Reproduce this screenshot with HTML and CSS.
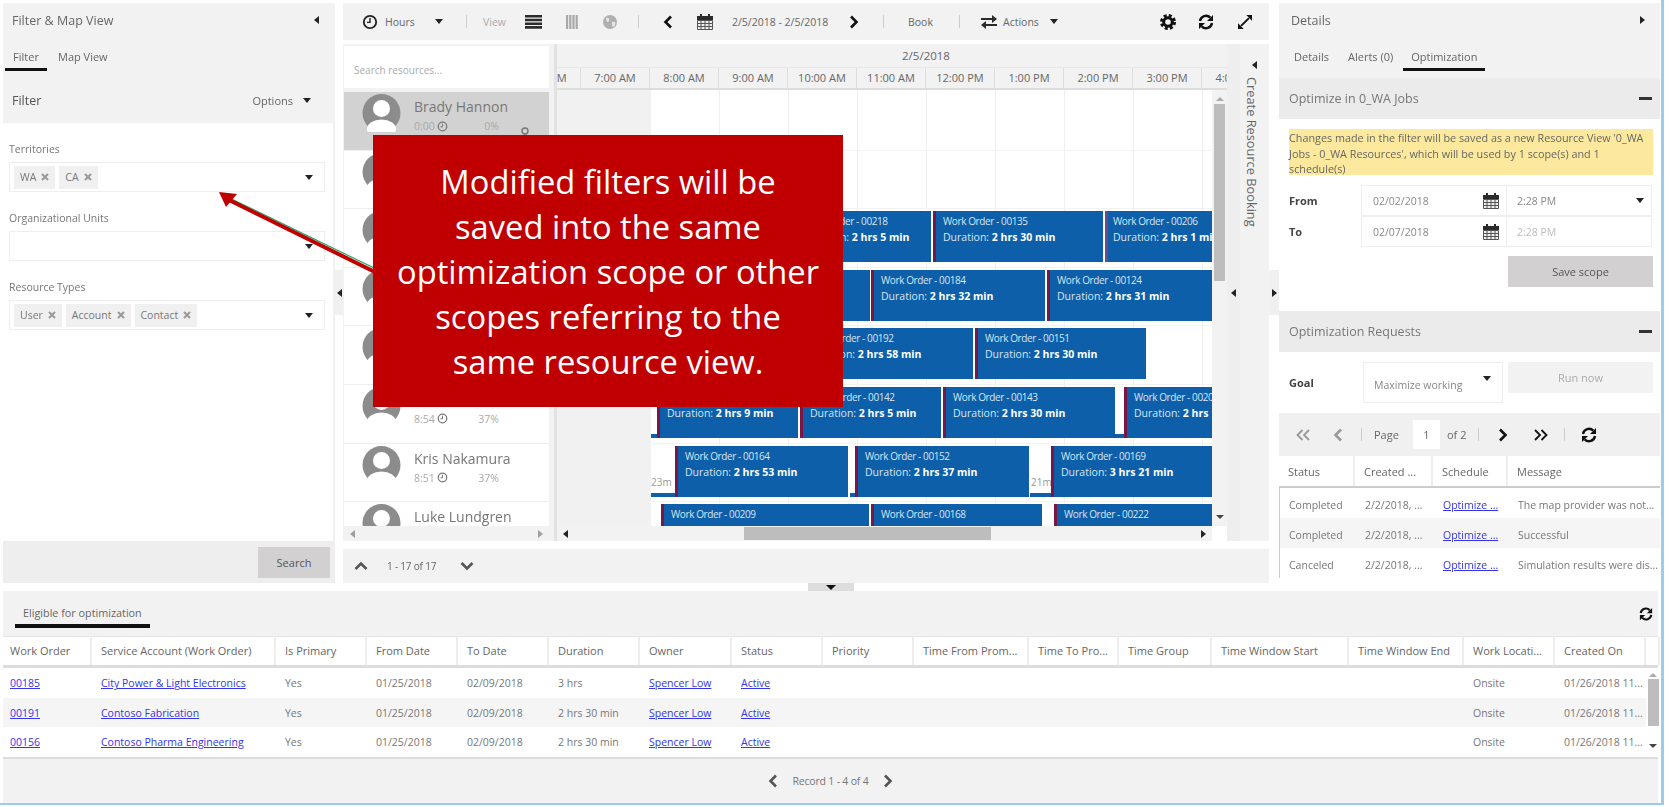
FILE: index.html
```html
<!DOCTYPE html>
<html lang="en">
<head>
<meta charset="utf-8">
<title>Schedule Board</title>
<link rel="stylesheet" href="styles.css">
</head>
<body>
<svg class="defs" width="0" height="0" aria-hidden="true">
  <symbol id="avatar" viewBox="0 0 38 38"><circle cx="19" cy="19" r="19" fill="#8c8c8c"/><circle cx="19" cy="14.5" r="8.5" fill="#fff"/><ellipse cx="19" cy="35" rx="14.5" ry="9.5" fill="#fff"/></symbol>
  <symbol id="clock" viewBox="0 0 16 16"><circle cx="8" cy="8" r="6.2" fill="none" stroke="currentColor" stroke-width="1.8"/><path d="M8 4v4.4h-3" fill="none" stroke="currentColor" stroke-width="1.4"/></symbol>
  <symbol id="list" viewBox="0 0 17 14"><path d="M0 0h17v2.6H0zM0 3.7h17v2.6H0zM0 7.4h17V10H0zM0 11.1h17v2.6H0z" fill="#2b2b2b"/></symbol>
  <symbol id="bars" viewBox="0 0 12 14"><path d="M0 0h2.2v14H0zM3.2 0h2.2v14H3.2zM6.4 0h2.2v14H6.4zM9.6 0h2.2v14H9.6z" fill="#a8a8a8"/></symbol>
  <symbol id="globe" viewBox="0 0 14 14"><circle cx="7" cy="7" r="7" fill="#b0b0b0"/><path d="M3 3c3-1 4 1 3 3S3 7 3 3zM9 7c3-1 4 0 3 3s-4 2-3-3z" fill="#e4e4e4"/></symbol>
  <symbol id="left" viewBox="0 0 10 14"><path d="M8 1.5 2.5 7 8 12.5" fill="none" stroke="currentColor" stroke-width="2.6"/></symbol>
  <symbol id="right" viewBox="0 0 10 14"><path d="M2 1.5 7.5 7 2 12.5" fill="none" stroke="currentColor" stroke-width="2.6"/></symbol>
  <symbol id="up" viewBox="0 0 14 10"><path d="M1.5 8 7 2.5 12.5 8" fill="none" stroke="currentColor" stroke-width="2.6"/></symbol>
  <symbol id="down" viewBox="0 0 14 10"><path d="M1.5 2 7 7.5 12.5 2" fill="none" stroke="currentColor" stroke-width="2.6"/></symbol>
  <symbol id="dleft" viewBox="0 0 16 12"><path d="M7.5 1 2.5 6l5 5M14 1 9 6l5 5" fill="none" stroke="currentColor" stroke-width="1.8"/></symbol>
  <symbol id="dright" viewBox="0 0 16 12"><path d="M2 1l5 5-5 5M8.500 1l5 5-5 5" fill="none" stroke="currentColor" stroke-width="1.8"/></symbol>
  <symbol id="cal" viewBox="0 0 16 16"><path d="M3 0h2v2h6V0h2v2h3v4H0V2h3z" fill="#2b2b2b"/><path d="M.5 6.500h15v9H.5zM4 6.500v9M8 6.500v9M12 6.500v9M.5 9.500h15M.5 12.500h15" fill="#eee" stroke="#555"/></symbol>
  <symbol id="swap" viewBox="0 0 16 14"><path d="M0 3h11V0l5 4-5 4V5H0zM16 9H5V6L0 10l5 4v-3h11z" fill="#2b2b2b"/></symbol>
  <symbol id="gear" viewBox="0 0 16 16"><circle cx="8" cy="8" r="4.300" fill="none" stroke="#111" stroke-width="3"/><circle cx="8" cy="8" r="6.500" fill="none" stroke="#111" stroke-width="3" stroke-dasharray="3 2.100"/></symbol>
  <symbol id="sync" viewBox="0 0 16 16"><path d="M2 7a6 6 0 0 1 10.300-3.300M14 9a6 6 0 0 1-10.300 3.300" fill="none" stroke="#111" stroke-width="2.400"/><path d="M15 1v6H9zM1 15V9h6z" fill="#111"/></symbol>
  <symbol id="expand" viewBox="0 0 16 16"><path d="M3.500 12.500 12.500 3.500" stroke="#111" stroke-width="2.200"/><path d="M16 0v6.500L9.500 0zM0 16V9.500L6.500 16z" fill="#111"/></symbol>
  <symbol id="x" viewBox="0 0 8 8"><path d="M1 1l6 6M7 1 1 7" stroke="#999" stroke-width="2"/></symbol>
  <symbol id="pin" viewBox="0 0 10 12"><circle cx="5" cy="4" r="3" fill="none" stroke="#777" stroke-width="1.400"/><path d="M5 7v5" stroke="#777" stroke-width="1.400"/></symbol>
</svg>

<div class="app">
  <div class="top">
    <section class="left">
      <div class="left-head">
        <div class="title-row"><span class="title">Filter &amp; Map View</span><i class="tri-l"></i></div>
        <div class="tabs"><span class="tab on tab-filter">Filter</span><span class="tab tab-map">Map View</span></div>
        <div class="filter-row"><strong class="filter-name">Filter</strong><span class="options">Options</span><i class="caret"></i></div>
      </div>
      <div class="left-body">
        <label class="field-label">Territories</label>
        <div class="box"><span class="chip">WA <svg class="x"><use href="#x"/></svg></span><span class="chip">CA <svg class="x"><use href="#x"/></svg></span><i class="caret push"></i></div>
        <label class="field-label">Organizational Units</label>
        <div class="box"><i class="caret push"></i></div>
        <label class="field-label">Resource Types</label>
        <div class="box"><span class="chip">User <svg class="x"><use href="#x"/></svg></span><span class="chip">Account <svg class="x"><use href="#x"/></svg></span><span class="chip">Contact <svg class="x"><use href="#x"/></svg></span><i class="caret push"></i></div>
      </div>
      <div class="left-foot"><button class="btn-search">Search</button></div>
    </section>

    <div class="split"><span class="split-tab"><i class="tri-l"></i></span></div>

    <section class="center">
      <div class="toolbar">
        <svg class="ic16 ml19"><use href="#clock"/></svg>
        <span class="tb-text w31 ml7">Hours</span>
        <i class="caret ml19"></i>
        <i class="sep ml22"></i>
        <span class="tb-text dim w23 ml16">View</span>
        <svg class="ic-list ml19"><use href="#list"/></svg>
        <svg class="ic-bars ml24"><use href="#bars"/></svg>
        <svg class="ic-globe ml25"><use href="#globe"/></svg>
        <i class="sep ml21"></i>
        <svg class="chev ml24"><use href="#left"/></svg>
        <svg class="ic16 ml24"><use href="#cal"/></svg>
        <span class="tb-text w94 ml19">2/5/2018 - 2/5/2018</span>
        <svg class="chev ml23"><use href="#right"/></svg>
        <i class="sep ml24"></i>
        <span class="tb-text w26 ml24">Book</span>
        <i class="sep ml25"></i>
        <svg class="ic16 ml21"><use href="#swap"/></svg>
        <span class="tb-text w38 ml6">Actions</span>
        <i class="caret ml9"></i>
        <svg class="ic16 ml101"><use href="#gear"/></svg>
        <svg class="ic16 ml22"><use href="#sync"/></svg>
        <svg class="ic14 ml24"><use href="#expand"/></svg>
      </div>

      <div class="sched">
        <div class="res">
          <div class="res-search">Search resources...</div>
          <div class="res-list">
            <div class="res-row sel"><svg class="avatar"><use href="#avatar"/></svg><div class="res-info"><div class="res-name">Brady Hannon</div><div class="res-sub"><span class="res-time">0:00</span><svg class="ic-clock"><use href="#clock"/></svg><span class="res-pct">0%</span></div></div><svg class="ic-pin"><use href="#pin"/></svg></div>
            <div class="res-row"><svg class="avatar"><use href="#avatar"/></svg></div>
            <div class="res-row"><svg class="avatar"><use href="#avatar"/></svg></div>
            <div class="res-row"><svg class="avatar"><use href="#avatar"/></svg></div>
            <div class="res-row"><svg class="avatar"><use href="#avatar"/></svg></div>
            <div class="res-row"><svg class="avatar"><use href="#avatar"/></svg><div class="res-info"><div class="res-name">&nbsp;</div><div class="res-sub"><span class="res-time">8:54</span><svg class="ic-clock"><use href="#clock"/></svg><span class="res-pct">37%</span></div></div></div>
            <div class="res-row"><svg class="avatar"><use href="#avatar"/></svg><div class="res-info"><div class="res-name">Kris Nakamura</div><div class="res-sub"><span class="res-time">8:51</span><svg class="ic-clock"><use href="#clock"/></svg><span class="res-pct">37%</span></div></div></div>
            <div class="res-row"><svg class="avatar"><use href="#avatar"/></svg><div class="res-info"><div class="res-name">Luke Lundgren</div></div></div>
          </div>
          <div class="hbar"><i class="tri-l faint"></i><i class="tri-r faint"></i></div>
        </div>
        <div class="res-divider"></div>
        <div class="tl">
          <div class="tl-date">2/5/2018</div>
          <div class="tl-hours">
            <span class="hour first">6:00 AM</span><span class="hour">7:00 AM</span><span class="hour">8:00 AM</span><span class="hour">9:00 AM</span><span class="hour">10:00 AM</span><span class="hour">11:00 AM</span><span class="hour">12:00 PM</span><span class="hour">1:00 PM</span><span class="hour">2:00 PM</span><span class="hour">3:00 PM</span><span class="hour">4:00 PM</span>
          </div>
          <div class="tl-main">
            <div class="canvas">
              <div class="off"></div>
              <div class="tl-row"></div>
              <div class="tl-row"></div>
              <div class="tl-row">
                <div class="bk" style="left:236px;width:138px"><p>Work Order - 00218</p><p>Duration: <b>2 hrs 5 min</b></p></div>
                <div class="bk" style="left:376px;width:170px"><p>Work Order - 00135</p><p>Duration: <b>2 hrs 30 min</b></p></div>
                <div class="bk thin" style="left:548px;width:120px"><p>Work Order - 00206</p><p>Duration: <b>2 hrs 1 min</b></p></div>
              </div>
              <div class="tl-row">
                <div class="bk" style="left:200px;width:113px"></div>
                <div class="bk" style="left:314px;width:174px"><p>Work Order - 00184</p><p>Duration: <b>2 hrs 32 min</b></p></div>
                <div class="bk" style="left:490px;width:170px"><p>Work Order - 00124</p><p>Duration: <b>2 hrs 31 min</b></p></div>
              </div>
              <div class="tl-row">
                <div class="bk" style="left:242px;width:174px"><p>Work Order - 00192</p><p>Duration: <b>2 hrs 58 min</b></p></div>
                <div class="bk" style="left:418px;width:171px"><p>Work Order - 00151</p><p>Duration: <b>2 hrs 30 min</b></p></div>
              </div>
              <div class="tl-row">
                <div class="base" style="left:94px;width:6px"></div>
                <div class="bk" style="left:100px;width:141px"><p>&nbsp;</p><p>Duration: <b>2 hrs 9 min</b></p></div>
                <div class="bk" style="left:243px;width:141px"><p>Work Order - 00142</p><p>Duration: <b>2 hrs 5 min</b></p></div>
                <div class="bk" style="left:386px;width:172px"><p>Work Order - 00143</p><p>Duration: <b>2 hrs 30 min</b></p></div>
                <div class="base" style="left:558px;width:9px"></div>
                <div class="bk" style="left:567px;width:120px"><p>Work Order - 00206</p><p>Duration: <b>2 hrs 10 min</b></p></div>
              </div>
              <div class="tl-row">
                <div class="base" style="left:94px;width:24px"></div><span class="gap-label" style="left:94px">23m</span>
                <div class="bk" style="left:118px;width:173px"><p>Work Order - 00164</p><p>Duration: <b>2 hrs 53 min</b></p></div>
                <div class="base" style="left:293px;width:5px"></div>
                <div class="bk" style="left:298px;width:174px"><p>Work Order - 00152</p><p>Duration: <b>2 hrs 37 min</b></p></div>
                <div class="base" style="left:473px;width:21px"></div><span class="gap-label" style="left:474px">21m</span>
                <div class="bk" style="left:494px;width:161px"><p>Work Order - 00169</p><p>Duration: <b>3 hrs 21 min</b></p></div>
              </div>
              <div class="tl-row last">
                <div class="bk" style="left:104px;width:208px"><p>Work Order - 00209</p></div>
                <div class="bk" style="left:314px;width:171px"><p>Work Order - 00168</p></div>
                <div class="bk" style="left:497px;width:158px"><p>Work Order - 00222</p></div>
              </div>
            </div>
            <div class="vbar"><i class="tri-u"></i><span class="vthumb"></span><i class="tri-d"></i></div>
          </div>
          <div class="tl-foot"><div class="hbar tl-hbar"><i class="tri-l"></i><span class="hthumb"></span><i class="tri-r"></i></div><span class="corner"></span></div>
        </div>
        <div class="crb">
          <span class="crb-edge"><i class="tri-l"></i></span>
          <div class="crb-col"><i class="tri-l"></i><span class="crb-text">Create Resource Booking</span></div>
        </div>
      </div>
      <div class="pager-bar">
        <svg class="chev-h"><use href="#up"/></svg>
        <span class="pager-text">1 - 17 of 17</span>
        <svg class="chev-h pager-down"><use href="#down"/></svg>
      </div>
    </section>

    <div class="split split-r"><span class="split-tab"><i class="tri-r"></i></span></div>

    <section class="right">
      <div class="right-head">
        <div class="title-row"><span class="title">Details</span><i class="tri-r"></i></div>
        <div class="tabs tabs-right"><span class="tab tab-d">Details</span><span class="tab tab-a">Alerts (0)</span><span class="tab on tab-o">Optimization</span></div>
      </div>
      <div class="sec-head">Optimize in 0_WA Jobs<i class="minus"></i></div>
      <div class="sec-body">
        <p class="notice">Changes made in the filter will be saved as a new Resource View '0_WA Jobs - 0_WA Resources', which will be used by 1 scope(s) and 1 schedule(s)</p>
        <div class="dt-row"><strong class="dt-label">From</strong><div class="dt-cell">02/02/2018<svg class="ic16 push"><use href="#cal"/></svg></div><div class="dt-cell">2:28 PM<i class="caret push"></i></div></div>
        <div class="dt-row"><strong class="dt-label">To</strong><div class="dt-cell">02/07/2018<svg class="ic16 push"><use href="#cal"/></svg></div><div class="dt-cell faded">2:28 PM</div></div>
        <button class="btn-save">Save scope</button>
      </div>
      <div class="sec-head">Optimization Requests<i class="minus"></i></div>
      <div class="goal-row">
        <strong class="goal-label">Goal</strong>
        <div class="goal-select">Maximize working<i class="caret goal-caret"></i></div>
        <button class="btn-run">Run now</button>
      </div>
      <div class="pg">
        <svg class="pg-d faint-ic"><use href="#dleft"/></svg>
        <svg class="pg-s faint-ic pg-prev"><use href="#left"/></svg>
        <i class="sep pg-sep1"></i>
        <span class="pg-page">Page</span>
        <span class="pg-input">1</span>
        <span class="pg-of">of 2</span>
        <i class="sep pg-sep2"></i>
        <svg class="pg-s pg-next"><use href="#right"/></svg>
        <svg class="pg-d pg-last"><use href="#dright"/></svg>
        <i class="sep pg-sep3"></i>
        <svg class="ic16 pg-sync"><use href="#sync"/></svg>
      </div>
      <div class="req-table">
        <div class="req-row req-head"><span>Status</span><span>Created ...</span><span>Schedule</span><span>Message</span></div>
        <div class="req-row"><span>Completed</span><span>2/2/2018, ...</span><span><a href="#">Optimize ...</a></span><span>The map provider was not...</span></div>
        <div class="req-row alt"><span>Completed</span><span>2/2/2018, ...</span><span><a href="#">Optimize ...</a></span><span>Successful</span></div>
        <div class="req-row"><span>Canceled</span><span>2/2/2018, ...</span><span><a href="#">Optimize ...</a></span><span>Simulation results were dis...</span></div>
      </div>
    </section>
  </div>

  <div class="toggle"><span class="toggle-tab"><i class="tri-d"></i></span></div>

  <section class="bottom">
    <div class="bottom-tabs"><span class="tab on tab-elig">Eligible for optimization</span><svg class="ic14 bottom-sync"><use href="#sync"/></svg></div>
    <div class="gh">
      <span>Work Order</span><span>Service Account (Work Order)</span><span>Is Primary</span><span>From Date</span><span>To Date</span><span>Duration</span><span>Owner</span><span>Status</span><span>Priority</span><span>Time From Prom...</span><span>Time To Pro...</span><span>Time Group</span><span>Time Window Start</span><span>Time Window End</span><span>Work Locati...</span><span>Created On</span><span></span>
    </div>
    <div class="gb">
      <div class="gb-rows">
        <div class="gr"><span><a href="#">00185</a></span><span><a href="#">City Power &amp; Light Electronics</a></span><span>Yes</span><span>01/25/2018</span><span>02/09/2018</span><span>3 hrs</span><span><a href="#">Spencer Low</a></span><span><a href="#">Active</a></span><span></span><span></span><span></span><span></span><span></span><span></span><span>Onsite</span><span>01/26/2018 11...</span></div>
        <div class="gr alt"><span><a href="#">00191</a></span><span><a href="#">Contoso Fabrication</a></span><span>Yes</span><span>01/25/2018</span><span>02/09/2018</span><span>2 hrs 30 min</span><span><a href="#">Spencer Low</a></span><span><a href="#">Active</a></span><span></span><span></span><span></span><span></span><span></span><span></span><span>Onsite</span><span>01/26/2018 11...</span></div>
        <div class="gr"><span><a href="#">00156</a></span><span><a href="#">Contoso Pharma Engineering</a></span><span>Yes</span><span>01/25/2018</span><span>02/09/2018</span><span>2 hrs 30 min</span><span><a href="#">Spencer Low</a></span><span><a href="#">Active</a></span><span></span><span></span><span></span><span></span><span></span><span></span><span>Onsite</span><span>01/26/2018 11...</span></div>
      </div>
      <div class="gb-bar"><i class="tri-u"></i><span class="gb-thumb"></span><i class="tri-d"></i></div>
    </div>
    <div class="g-foot"><svg class="chev g-chev"><use href="#left"/></svg><span class="g-text">Record 1 - 4 of 4</span><svg class="chev g-chev"><use href="#right"/></svg></div>
  </section>
</div>

<svg class="arrow" width="170" height="90" viewBox="0 0 170 90" aria-hidden="true">
  <path d="M6 7 168 85.500" stroke="#1fa35a" stroke-width="1.200" transform="translate(1,-2.800)"/>
  <path d="M10 8 168 86" stroke="#c00000" stroke-width="4"/>
  <path d="M0 0 18 2 7 15z" fill="#c00000"/>
</svg>
<div class="callout">Modified filters will be<br>saved into the same<br>optimization scope or other<br>scopes referring to the<br>same resource view.</div>
</body>
</html>
```
FILE: styles.css
```css
* { box-sizing: border-box; }
html, body { margin: 0; padding: 0; }
body { position: relative; width: 1670px; height: 807px; overflow: hidden; background: #fff; font-family: "Open Sans", "Noto Sans", sans-serif; font-size: 11px; color: #666; }
.defs { position: absolute; }
p { margin: 0; }
a { color: #3434e8; text-decoration: underline; }
button { font: inherit; border: 0; }
i { display: block; font-style: normal; }
svg { display: block; flex: none; }

.app { width: 1664px; height: 805px; padding: 3px 3px 0 3px; border-right: 3px solid #9fcbea; border-bottom: 2px solid #9fcbea; filter: blur(0.6px); display: flex; flex-direction: column; }
.top { display: flex; height: 580px; flex: none; }

/* triangles */
.caret { width: 0; height: 0; flex: none; border-left: 4.500px solid transparent; border-right: 4.500px solid transparent; border-top: 5px solid #222; }
.tri-l { width: 0; height: 0; flex: none; border-top: 4.500px solid transparent; border-bottom: 4.500px solid transparent; border-right: 5px solid #222; }
.tri-r { width: 0; height: 0; flex: none; border-top: 4.500px solid transparent; border-bottom: 4.500px solid transparent; border-left: 5px solid #222; }
.tri-u { width: 0; height: 0; border-left: 4px solid transparent; border-right: 4px solid transparent; border-bottom: 4px solid #aaa; }
.tri-d { width: 0; height: 0; border-left: 4px solid transparent; border-right: 4px solid transparent; border-top: 4px solid #444; }
.faint { opacity: .4; }
.push { margin-left: auto; }

/* panels head */
.left { width: 332px; flex: none; display: flex; flex-direction: column; }
.left-head { height: 120px; background: #f2f2f2; flex: none; }
.title-row { height: 34px; display: flex; align-items: center; justify-content: space-between; padding: 0 16px 0 9px; }
.title { font-size: 12.500px; color: #666; }
.tabs { display: flex; height: 34px; align-items: flex-end; padding-left: 2px; }
.tab { font-size: 11px; color: #666; height: 24px; padding: 0 0 3px; line-height: 20px; white-space: nowrap; border-bottom: 3px solid transparent; }
.tab.on { border-bottom-color: #111; }
.tab-filter { width: 42px; text-align: center; }
.tab-map { margin-left: 11px; }
.filter-row { display: flex; align-items: center; height: 45px; margin-top: 7px; padding: 0 24px 0 9px; }
.filter-name { font-size: 12.500px; font-weight: 400; color: #555; }
.options { margin-left: auto; font-size: 11px; margin-right: 10px; }
.left-body { flex: 1; padding: 0 8px 0 6px; border-right: 2px solid #f0f0f0; }
.field-label { display: block; font-size: 10.500px; line-height: 14px; margin: 19px 0 6px; color: #777; }
.box { height: 30px; border: 1px solid #eee; padding: 3px 11px 3px 4px; display: flex; align-items: center; gap: 4px; }
.chip { height: 23px; padding: 0 6px; background: #f0f0f0; display: flex; align-items: center; gap: 5px; font-size: 10.500px; color: #777; }
.x { width: 8px; height: 8px; }
.left-foot { height: 42px; flex: none; background: #eee; display: flex; justify-content: flex-end; align-items: center; padding-right: 5px; }
.btn-search { width: 72px; height: 31px; background: #d2d0d1; color: #555; font-size: 11px; }

.split { width: 8px; flex: none; padding-top: 267px; }
.split-r { width: 10px; }
.split-tab { display: flex; align-items: center; justify-content: center; height: 45px; background: #f0f0f0; }

/* center */
.center { width: 926px; flex: none; display: flex; flex-direction: column; }
.toolbar { height: 37px; flex: none; background: #f2f2f2; display: flex; align-items: center; }
.toolbar .caret { margin-right: 1px; }
.tb-text { font-size: 10.500px; white-space: nowrap; flex: none; color: #666; }
.dim { color: #aaa; }
.w23 { width: 23px; } .w26 { width: 26px; } .w31 { width: 31px; } .w38 { width: 38px; } .w94 { width: 94px; }
.ml6 { margin-left: 6px; } .ml7 { margin-left: 7px; } .ml9 { margin-left: 9px; } .ml16 { margin-left: 16px; } .ml19 { margin-left: 19px; } .ml21 { margin-left: 21px; } .ml22 { margin-left: 22px; } .ml23 { margin-left: 23px; } .ml24 { margin-left: 24px; } .ml25 { margin-left: 25px; } .ml101 { margin-left: 101px; }
.ic16 { width: 16px; height: 16px; color: #222; }
.ic14 { width: 14px; height: 14px; }
.ic-list { width: 17px; height: 14px; }
.ic-bars { width: 12px; height: 14px; }
.ic-globe { width: 14px; height: 14px; }
.chev { width: 10px; height: 14px; color: #111; }
.sep { width: 1px; height: 13px; background: #ccc; flex: none; }

.sched { height: 497px; margin-top: 4px; flex: none; display: flex; background: #f2f2f2; }
.res { width: 206px; flex: none; display: flex; flex-direction: column; padding-left: 1px; }
.res-search { height: 42px; margin-top: 2px; background: #fff; flex: none; padding-left: 10px; line-height: 48px; font-size: 10px; color: #aaa; }
.res-list { height: 434px; margin-top: 4px; flex: none; overflow: hidden; background: #fff; }
.res-row { position: relative; height: 58.600px; display: flex; padding-left: 18px; border-bottom: 1px solid #eee; }
.res-row.sel { background: #d2d2d2; }
.avatar { width: 39px; height: 38px; margin-top: 2px; }
.res-info { margin-left: 13px; width: 85px; padding-top: 5px; }
.res-name { font-size: 14px; line-height: 20px; color: #777; white-space: nowrap; }
.res-sub { display: flex; align-items: center; height: 18px; font-size: 10.500px; color: #aaa; }
.res-time { width: 21px; }
.ic-clock { width: 11px; height: 11px; color: #777; margin-left: 2px; }
.res-pct { margin-left: auto; }
.ic-pin { position: absolute; right: 19px; top: 35px; width: 10px; height: 12px; }
.hbar { height: 15px; flex: none; background: #f2f2f2; display: flex; align-items: center; justify-content: space-between; padding: 0 6px; }
.res-divider { width: 8px; flex: none; border-right: 3px solid #e2e2e2; }

.tl { width: 670px; flex: none; display: flex; flex-direction: column; }
.tl-date { height: 23px; line-height: 24px; text-align: center; font-size: 11.500px; color: #666; padding-left: 68px; flex: none; }
.tl-hours { height: 23px; display: flex; overflow: hidden; flex: none; border-bottom: 2px solid #ddd; border-top: 1px solid #e8e8e8; }
.hour { width: 69px; flex: none; text-align: center; font-size: 11px; line-height: 20px; border-right: 1px solid #ddd; color: #666; white-space: nowrap; overflow: hidden; }
.hour.first { margin-left: -45px; }
.tl-main { display: flex; height: 436px; flex: none; }
.canvas { position: relative; width: 655px; height: 436px; overflow: hidden; padding-top: 2px; background-color: #fff; background-image: linear-gradient(90deg, #efefef 1px, transparent 1px); background-size: 69px 100%; background-position: 24px 0; }
.off { position: absolute; left: 0; top: 0; bottom: 0; width: 94px; background: #f1f1f1; }
.tl-row { position: relative; height: 58.600px; border-bottom: 1px solid #f2f2f2; }
.bk { position: absolute; top: 2px; height: 51px; background: #0d5fa9; border-left: 3px solid #7a1546; padding: 2px 0 0 7px; color: #d7e6f4; font-size: 10.500px; line-height: 16px; white-space: nowrap; overflow: hidden; }
.bk p:first-child { font-size: 10px; letter-spacing: -.4px; }
.bk b { color: #fff; font-weight: 700; }
.bk.thin { border-left-color: #6a4a8e; padding-left: 5px; }
.base { position: absolute; top: 49px; height: 4px; background: #0d5fa9; }
.gap-label { position: absolute; top: 31px; font-size: 10px; color: #999; }
.vbar { width: 15px; flex: none; background: #f2f2f2; display: flex; flex-direction: column; align-items: center; padding-top: 7px; }
.vthumb { width: 11px; height: 177px; margin-top: 3px; background: #bdbdbd; }
.vbar .tri-d { margin-top: auto; margin-bottom: 7px; }
.tl-foot { display: flex; height: 15px; flex: none; }
.tl-hbar { width: 655px; justify-content: flex-start; padding: 0 6px 0 6px; }
.hthumb { width: 247px; height: 13px; margin-left: 176px; background: #bdbdbd; }
.tl-hbar .tri-r { margin-left: auto; }
.corner { width: 15px; background: #fff; }
.crb { width: 42px; flex: none; display: flex; background: #f2f2f2; }
.crb-edge { width: 13px; flex: none; padding: 245px 0 0 4px; background: #eee; }
.crb-col { flex: 1; display: flex; flex-direction: column; align-items: center; padding-top: 17px; }
.crb-text { writing-mode: vertical-rl; font-size: 12.800px; margin: 8px 6px 0 0; color: #666; white-space: nowrap; }

.pager-bar { height: 34px; margin-top: 8px; flex: none; background: #f2f2f2; display: flex; align-items: center; padding-left: 11px; }
.chev-h { width: 14px; height: 10px; color: #555; }
.pager-text { margin-left: 19px; width: 50px; font-size: 10px; white-space: nowrap; letter-spacing: -.2px; }
.pager-down { margin-left: 23px; }

/* right */
.right { width: 381px; flex: none; display: flex; flex-direction: column; }
.right-head { height: 75px; background: #f2f2f2; flex: none; }
.right-head .title-row { padding: 0 15px 0 12px; }
.tabs-right { padding-left: 15px; }
.tab-a { margin-left: 19px; }
.tab-o { margin-left: 10px; padding: 0 8px 3px; }
.sec-head { height: 41px; flex: none; background: #ebebeb; display: flex; align-items: center; justify-content: space-between; padding: 0 8px 0 10px; font-size: 12.500px; color: #777; }
.minus { width: 13px; height: 3px; background: #333; }
.sec-body { height: 192px; flex: none; padding: 10px 7px 0 10px; }
.notice { height: 46px; background: #fde99d; padding: 1px 0 0 0; font-size: 10.800px; line-height: 15.500px; color: #666; }
.dt-row { display: flex; height: 31px; }
.dt-row:first-of-type { margin-top: 10px; }
.dt-label { width: 72px; color: #444; font-size: 11px; line-height: 32px; font-weight: 700; }
.dt-cell { width: 146px; display: flex; align-items: center; padding: 0 7px 0 11px; border: 1px solid #eee; font-size: 10.500px; color: #888; }
.dt-cell + .dt-cell { width: 145px; padding-left: 10px; border-left: 0; }
.faded { color: #bbb; }
.btn-save { display: block; width: 145px; height: 31px; margin: 9px 0 0 auto; background: #d2d0d1; color: #555; font-size: 11px; }
.goal-row { height: 61px; flex: none; display: flex; padding: 10px 7px 0 10px; }
.goal-label { width: 74px; font-size: 11px; line-height: 42px; color: #444; }
.goal-select { position: relative; width: 140px; height: 41px; border: 1px solid #eee; padding: 15px 0 0 10px; font-size: 10.500px; color: #888; white-space: nowrap; }
.goal-caret { position: absolute; right: 11px; top: 13px; }
.btn-run { width: 145px; height: 31px; margin-left: 5px; background: #f2f2f2; color: #aaa; font-size: 11px; }
.pg { height: 43px; flex: none; background: #f0f0f0; display: flex; align-items: center; padding-left: 16px; font-size: 11px; color: #666; }
.pg-d { width: 16px; height: 12px; color: #111; }
.pg-s { width: 10px; height: 14px; color: #111; }
.faint-ic { color: #999; }
.pg-prev { margin-left: 22px; }
.pg-sep1 { margin-left: 18px; }
.pg-page { margin-left: 12px; width: 24px; }
.pg-input { width: 27px; height: 29px; margin-left: 15px; background: #fff; text-align: center; line-height: 29px; }
.pg-of { margin-left: 7px; width: 19px; white-space: nowrap; }
.pg-sep2 { margin-left: 12px; }
.pg-next { margin-left: 19px; }
.pg-last { margin-left: 25px; }
.pg-sep3 { margin-left: 15px; }
.pg-sync { margin-left: 16px; }
.req-table { border-left: 1px solid #ccc; margin-top: 0; }
.req-row { display: grid; grid-template-columns: 76px 78px 75px 1fr; height: 30px; align-items: center; padding-top: 3px; font-size: 10.500px; color: #777; white-space: nowrap; overflow: hidden; }
.req-row span { padding-left: 9px; }
.req-row.alt { background: #f5f5f5; }
.req-head { margin-left: -1px; background: #fff; border-bottom: 2px solid #ccc; height: 32px; padding-top: 0; color: #666; font-size: 11px; }
.req-head span { height: 30px; line-height: 32px; border-right: 2px solid #eee; }
.req-head span:last-child { border-right: 0; }

/* toggle */
.toggle { height: 8px; flex: none; padding-left: 805px; }
.toggle-tab { display: flex; width: 46px; height: 8px; background: #ddd; align-items: center; justify-content: center; }
.toggle-tab .tri-d { border-top-color: #111; border-left-width: 5px; border-right-width: 5px; border-top-width: 5px; }

/* bottom grid */
.bottom { flex: 1; background: #f2f2f2; display: flex; flex-direction: column; }
.bottom-tabs { height: 45px; flex: none; display: flex; align-items: flex-end; justify-content: space-between; padding: 0 5px 8px 12px; }
.tab-elig { font-size: 10.800px; height: 30px; padding: 5px 8px 0; border-bottom-width: 4px; line-height: 20px; }
.bottom-sync { margin-bottom: 7px; }
.gh, .gr { display: grid; grid-template-columns: 89px 184px 91px 91px 91px 91px 92px 91px 91px 115px 90px 93px 137px 115px 91px 91px; }
.gh { grid-template-columns: 89px 184px 91px 91px 91px 91px 92px 91px 91px 115px 90px 93px 137px 115px 91px 91px 14px; height: 32px; flex: none; background: #fff; border-top: 1px solid #e6e6e6; border-bottom: 3px solid #ddd; }
.gh span { padding-left: 9px; line-height: 28px; font-size: 11px; color: #666; border-right: 2px solid #eee; white-space: nowrap; overflow: hidden; }
.gb { display: flex; height: 91px; flex: none; background: #fff; border-bottom: 2px solid #ddd; }
.gb-rows { width: 1643px; flex: none; }
.gr { height: 29.500px; align-items: center; padding-top: 1px; font-size: 10.500px; color: #777; white-space: nowrap; }
.gr span { padding-left: 9px; overflow: hidden; }
.gh span:first-child, .gr span:first-child { padding-left: 7px; }
.gr.alt { background: #f5f5f5; }
.gb-bar { width: 14px; flex: none; background: #fff; display: flex; flex-direction: column; align-items: center; padding-top: 5px; }
.gb-thumb { width: 11px; height: 47px; margin-top: 2px; background: #bdbdbd; }
.gb-bar .tri-d { margin-top: 18px; }
.g-foot { flex: 1; display: flex; align-items: center; justify-content: center; gap: 15px; padding: 0 5px 0 5px; }
.g-chev { color: #555; }
.g-text { font-size: 10.500px; letter-spacing: -.2px; color: #777; }

/* annotation on top of the screenshot */
.arrow { position: absolute; left: 219px; top: 192px; }
.callout { position: absolute; left: 373px; top: 135px; width: 470px; height: 272px; background: #c00000; color: #fff; text-align: center; font-family: "Open Sans", "Noto Sans", sans-serif; font-size: 32.700px; line-height: 45px; padding-top: 24px; white-space: nowrap; }
```
